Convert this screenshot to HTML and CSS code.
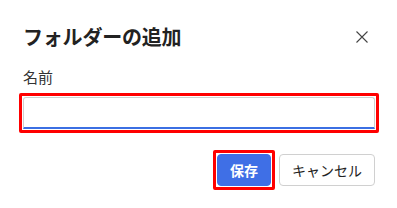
FILE: index.html
```html
<!DOCTYPE html>
<html lang="ja">
<head>
<meta charset="utf-8">
<link rel="stylesheet" href="styles.css">
</head>
<body>
<div class="dialog">
  <div class="header">
    <h1 class="title">フォルダーの追加</h1>
    <button class="close" aria-label="閉じる">
      <svg width="12" height="12" viewBox="0 0 12 12"><path d="M0.5 0.5L11.5 11.5M11.5 0.5L0.5 11.5" stroke="#444" stroke-width="1.1" fill="none"/></svg>
    </button>
  </div>
  <label class="label" for="name">名前</label>
  <div class="field highlight">
    <input id="name" class="input" type="text">
  </div>
  <div class="actions">
    <span class="highlight"><button class="btn btn-primary">保存</button></span>
    <button class="btn btn-secondary">キャンセル</button>
  </div>
</div>
</body>
</html>
```
FILE: styles.css
```css
html, body {
  margin: 0;
  padding: 0;
  background: #fff;
}
body {
  font-family: "Noto Sans CJK JP", "Noto Sans", sans-serif;
  color: #222;
}
.dialog {
  width: 397px;
  height: 208px;
  box-sizing: border-box;
  padding: 23px 18px 0 19px;
}
.header {
  display: flex;
  align-items: center;
  justify-content: space-between;
  height: 28px;
  padding: 0 4px;
}
.title {
  margin: 0;
  font-size: 20px;
  font-weight: 700;
  line-height: 28px;
  color: #222;
  letter-spacing: -0.2px;
}
.close {
  border: 0;
  background: none;
  padding: 0;
  width: 12px;
  height: 12px;
  margin-right: 7px;
  display: flex;
}
.label {
  display: block;
  margin-top: 15px;
  padding: 0 4px;
  font-size: 15px;
  line-height: 22px;
  color: #333;
}
.highlight {
  display: block;
  border: 3px solid #ff0000;
  border-radius: 2px;
  padding: 1px;
}
.field {
  margin-top: 5px;
}
.input {
  display: block;
  box-sizing: border-box;
  width: 100%;
  height: 32px;
  margin: 0;
  border: 1px solid #cfcfcf;
  border-bottom: 2px solid #3b6fe3;
  border-radius: 3px 3px 0 0;
  outline: none;
  background: #fff;
}
.actions {
  display: flex;
  justify-content: flex-end;
  align-items: center;
  gap: 4px;
  margin-top: 17px;
  padding-right: 4px;
}
.btn {
  display: block;
  font-family: "Noto Sans CJK JP", "Noto Sans", sans-serif;
  font-size: 14px;
  height: 32px;
  padding: 0 12px;
  border-radius: 4px;
  box-sizing: border-box;
  line-height: 30px;
}
.btn-primary {
  background: #3f6fe6;
  color: #fff;
  border: 1px solid #3f6fe6;
  font-weight: 700;
}
.btn-secondary {
  background: #fff;
  color: #222;
  border: 1px solid #d0d0d0;
}
```
